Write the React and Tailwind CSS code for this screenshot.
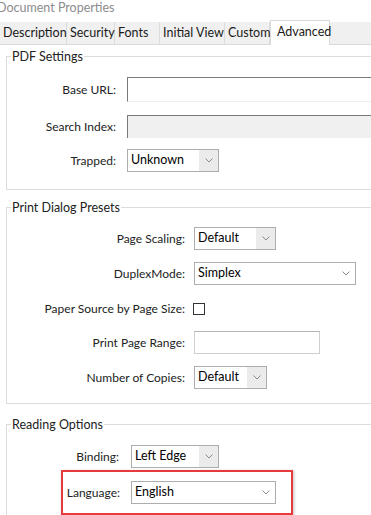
import React from "react";

function Chevron() {
  return (
    <svg width="8" height="5" viewBox="0 0 8 5" fill="none">
      <path d="M0.5 0.5 L4 4 L7.5 0.5" stroke="#8a8a8a" strokeWidth="1" />
    </svg>
  );
}

function Select({ value, width, grayArrow }) {
  return (
    <div className={`flex h-[23px] border border-[#adadad] bg-white ${width}`}>
      <div className="flex flex-1 items-center pl-[3px] text-[12.5px] text-black">{value}</div>
      <div
        className={`flex w-[19px] items-center justify-center ${grayArrow ? "bg-[#ebebeb]" : "bg-white"}`}
      >
        <Chevron />
      </div>
    </div>
  );
}

function Row({ label, labelWidth, children, className = "" }) {
  return (
    <div className={`flex items-center ${className}`}>
      <div className={`whitespace-nowrap text-right text-[12px] text-[#222] ${labelWidth}`}>{label}</div>
      {children}
    </div>
  );
}

function Group({ title, children, className = "" }) {
  return (
    <fieldset className={`w-[400px] border border-[#dcdcdc] ${className}`}>
      <legend className="ml-[4px] px-[1px] text-[12.5px] leading-[15px] text-[#222]">{title}</legend>
      {children}
    </fieldset>
  );
}

export default function App() {
  const tabs = [
    { name: "Description", w: "w-[67px]" },
    { name: "Security", w: "w-[48px]" },
    { name: "Fonts", w: "w-[45px]" },
    { name: "Initial View", w: "w-[65px]" },
    { name: "Custom", w: "w-[45px]" },
  ];

  return (
    <div className="h-[515px] w-[371px] overflow-hidden bg-white font-['Lato',sans-serif]">
      <div className="h-[22px]">
        <span className="-ml-[3px] block whitespace-nowrap text-[12.5px] leading-[15px] text-[#8c8c8c]">Document Properties</span>
      </div>

      <div className="flex h-[23px] items-end border-b border-[#dadada] bg-[#f0f0f0]">
        {tabs.map((t) => (
          <div
            key={t.name}
            className={`flex h-[22px] items-center whitespace-nowrap border-r border-[#dcdcdc] pl-[3px] text-[12.5px] text-[#1a1a1a] ${t.w}`}
          >
            {t.name}
          </div>
        ))}
        <div className="-mb-[1px] flex h-[25px] w-[60px] items-start whitespace-nowrap border-x border-t border-[#dadada] bg-white pl-[6px] pt-[2px] text-[12.5px] text-[#1a1a1a]">
          Advanced
        </div>
      </div>

      <div className="pl-[6px]">
        <Group title="PDF Settings" className="mt-[4px] pb-[17px]">
          <Row label="Base URL:" labelWidth="w-[109px]" className="mt-[13px]">
            <div className="ml-[11px] h-[25px] flex-1 border-l border-t border-b border-l-[#7a7a7a] border-t-[#7a7a7a] border-b-[#eeeeee] bg-white" />
          </Row>
          <Row label="Search Index:" labelWidth="w-[109px]" className="mt-[13px]">
            <div className="ml-[11px] h-[23px] flex-1 border-l border-t border-l-[#7a7a7a] border-t-[#7a7a7a] bg-[#f0f0f0]" />
          </Row>
          <Row label="Trapped:" labelWidth="w-[109px]" className="mt-[11px]">
            <div className="ml-[11px]">
              <Select value="Unknown" width="w-[92px]" grayArrow />
            </div>
          </Row>
        </Group>

        <Group title="Print Dialog Presets" className="mt-[10px] pb-[14px]">
          <Row label="Page Scaling:" labelWidth="w-[178px]" className="mt-[12px]">
            <div className="ml-[9px]">
              <Select value="Default" width="w-[82px]" grayArrow />
            </div>
          </Row>
          <Row label="DuplexMode:" labelWidth="w-[178px]" className="mt-[12px]">
            <div className="ml-[9px]">
              <Select value="Simplex" width="w-[162px]" />
            </div>
          </Row>
          <Row label="Paper Source by Page Size:" labelWidth="w-[178px]" className="mt-[12px] h-[23px]">
            <div className="ml-[8px] h-[12px] w-[12px] border border-[#333] bg-white" />
          </Row>
          <Row label="Print Page Range:" labelWidth="w-[178px]" className="mt-[11px]">
            <div className="ml-[9px] h-[23px] w-[126px] border border-[#cfcfcf] border-t-[#b5b5b5] bg-white" />
          </Row>
          <Row label="Number of Copies:" labelWidth="w-[178px]" className="mt-[12px]">
            <div className="ml-[9px]">
              <Select value="Default" width="w-[73px]" grayArrow />
            </div>
          </Row>
        </Group>

        <Group title="Reading Options" className="mt-[13px] pb-[20px]">
          <Row label="Binding:" labelWidth="w-[112px]" className="mt-[13px]">
            <div className="ml-[12px]">
              <Select value="Left Edge" width="w-[88px]" grayArrow />
            </div>
          </Row>
          <div className="ml-[54px] mt-[2px] flex h-[45px] w-[232px] items-center border-2 border-[#e8393b] shadow-[1px_1px_3px_rgba(0,0,0,0.25)]">
            <div className="w-[57px] text-right text-[12px] text-[#222]">Language:</div>
            <div className="ml-[11px]">
              <Select value="English" width="w-[145px]" />
            </div>
          </div>
        </Group>
      </div>
    </div>
  );
}
